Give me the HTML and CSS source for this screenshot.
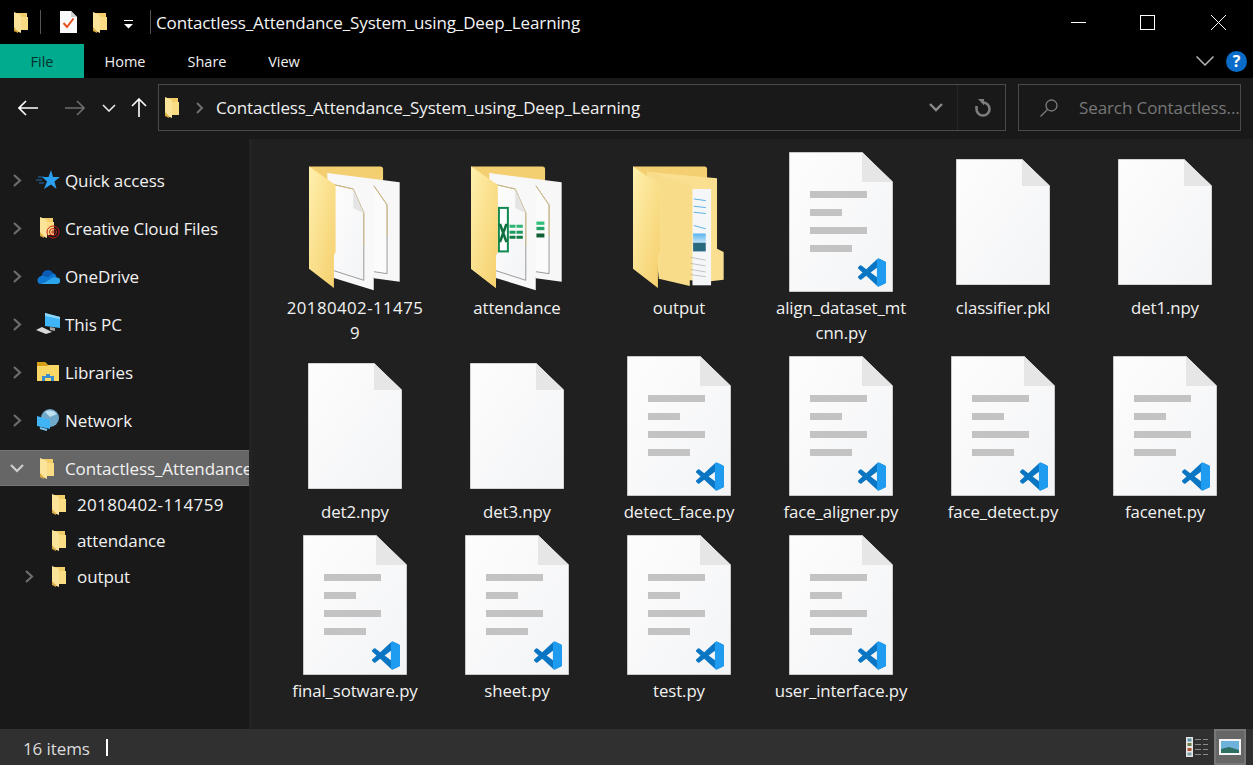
FILE: index.html
```html
<!DOCTYPE html>
<html lang="en">
<head>
<meta charset="utf-8">
<title>Contactless_Attendance_System_using_Deep_Learning</title>
<link rel="stylesheet" href="styles.css">
</head>
<body>
<svg class="defs" aria-hidden="true">
  <defs>
    <linearGradient id="leaf" x1="0" y1="0" x2="1" y2="1"><stop offset="0" stop-color="#fff0ad"/><stop offset="1" stop-color="#f5cf6c"/></linearGradient>
    <linearGradient id="page" x1="0" y1="0" x2="1" y2="1"><stop offset="0" stop-color="#fdfdfd"/><stop offset="1" stop-color="#f3f4f6"/></linearGradient>
    <linearGradient id="sky" x1="0" y1="0" x2="0" y2="1"><stop offset="0" stop-color="#59b4ee"/><stop offset="1" stop-color="#cde8f8"/></linearGradient>
    <clipPath id="vs-right"><rect x="16" y="0" width="8" height="24"/></clipPath>
    <symbol id="chev-r" viewBox="0 0 9 13"><path d="M1 1L7 6.500L1 12" fill="none" stroke="#6d6d6d" stroke-width="2.200"/></symbol>
    <symbol id="mini" viewBox="0 0 14 21">
      <path d="M1 1H13V17H1Z" fill="#f3cd6a"/>
      <path d="M0 0L7 3V21L0 18Z" fill="#fbe49a"/>
      <path d="M7 5H14V18H7Z" fill="#fadc85"/>
      <path d="M0 15L4 19.500L4 21L0 19Z" fill="#d8a93e"/>
    </symbol>
    <symbol id="vs" viewBox="0 0 24 24">
      <path fill="#0a75c2" d="M23.150 2.587L18.210.21a1.494 1.494 0 0 0-1.705.29l-9.460 8.630-4.120-3.128a.999.999 0 0 0-1.276.057L.327 7.261A1 1 0 0 0 .326 8.740L3.899 12 .326 15.260a1 1 0 0 0 .001 1.479L1.650 17.940a.999.999 0 0 0 1.276.057l4.120-3.128 9.460 8.630a1.492 1.492 0 0 0 1.704.290l4.942-2.377A1.500 1.500 0 0 0 24 20.060V3.939a1.500 1.500 0 0 0-.850-1.352zm-5.146 14.861L10.826 12l7.178-5.448v10.896z"/>
      <path fill="#1f9cf0" clip-path="url(#vs-right)" d="M23.150 2.587L18.210.21a1.494 1.494 0 0 0-1.705.29L16 1V23l.5.5a1.492 1.492 0 0 0 1.704.290l4.942-2.377A1.500 1.500 0 0 0 24 20.060V3.939a1.500 1.500 0 0 0-.850-1.352zm-5.146 14.861V6.552v10.896z"/>
    </symbol>
    <symbol id="pyfile" viewBox="0 0 104 140">
      <path d="M.5.500H73L103.500 30V139.500H.5Z" fill="url(#page)" stroke="#c9c9c9"/>
      <path d="M73 0V30H104Z" fill="#e6e6e6"/>
      <rect class="ln" x="21" y="39" width="57" height="7"/>
      <rect class="ln" x="21" y="57" width="32" height="7"/>
      <rect class="ln" x="21" y="75" width="57" height="7"/>
      <rect class="ln" x="21" y="93" width="42" height="7"/>
      <use href="#vs" x="69" y="106" width="28" height="29"/>
    </symbol>
    <symbol id="blank" viewBox="0 0 94 126">
      <path d="M.5.500H66L93.500 27V125.500H.5Z" fill="url(#page)" stroke="#d4d4d4"/>
      <path d="M66 0V27H94Z" fill="#e6e6e6"/>
    </symbol>
    <symbol id="papers" viewBox="85 55 280 385">
      <path d="M85 62H300Q308 62 308 70V112H85Z" fill="#f3cf72"/>
      <path d="M140 82L358 110V409L280 399Z" fill="#f7f7f7"/>
      <path d="M280 120L320 178V385L280 379" fill="#fbfbfb" stroke="#6b6b6b" stroke-width="2"/>
      <path d="M280 120L320 178V270" fill="none" stroke="#e6c46a" stroke-width="2"/>
      <path d="M140 82L280 122V435L150 395Z" fill="#f8f8f8"/>
      <path d="M160 117L218 130L250 202V405L160 376" fill="url(#page)" stroke="#6b6b6b" stroke-width="2"/>
      <path d="M160 117L218 130L250 202V300" fill="none" stroke="#e6c46a" stroke-width="2"/>
      <path d="M218 131V188L250 202Z" fill="#e4e4e4"/>
      <path d="M85 62L165 118V320L160 330V428L85 370Z" fill="url(#leaf)"/>
    </symbol>
    <symbol id="output" viewBox="67 55 280 385">
      <path d="M67 62H282Q290 62 290 70V110H67Z" fill="#f3cf72"/>
      <path d="M108 78L320 98V310L340 320V403L300 408L145 400Z" fill="#fadf90"/>
      <rect x="246" y="130" width="56" height="290" fill="#f5f6f8"/>
      <path d="M250 160L286 165M250 182L286 186M250 200L286 204M250 240L286 250" stroke="#3da2e0" stroke-width="2.500"/>
      <rect x="248" y="264" width="38" height="30" fill="url(#sky)"/>
      <rect x="248" y="292" width="38" height="26" fill="#2a6a7e"/>
      <path d="M240 336L286 344M240 354L286 362M240 372L286 380M240 388L286 394" stroke="#a9a9a9" stroke-width="2"/>
      <path d="M108 78L245 120V300L238 320V422L145 400V330L150 320V115Z" fill="#f9dc89"/>
      <path d="M67 62L148 118V320L142 330V428L67 370Z" fill="url(#leaf)"/>
    </symbol>
  </defs>
</svg>

<div class="window">
  <header class="titlebar">
    <svg class="q-folder"><use href="#mini"/></svg>
    <span class="q-sep first"></span>
    <svg class="q-doc" viewBox="0 0 17 22">
      <path d="M0 0H11L17 6V22H0Z" fill="#fafafa"/>
      <path d="M11 0V6H17Z" fill="#cfcfcf"/>
      <path d="M3.500 12L7 16L13.500 7.500" fill="none" stroke="#e8501e" stroke-width="2"/>
    </svg>
    <svg class="q-folder second"><use href="#mini"/></svg>
    <svg class="q-drop" viewBox="0 0 9 9"><path d="M0 .5H9" stroke="#fff"/><path d="M0 4H9L4.500 8.500Z" fill="#fff"/></svg>
    <span class="q-sep last"></span>
    <span class="title-text">Contactless_Attendance_System_using_Deep_Learning</span>
    <div class="win-controls">
      <svg class="win-btn" viewBox="0 0 15 15"><path d="M0 7.500H15" stroke="#fff"/></svg>
      <svg class="win-btn max" viewBox="0 0 15 15"><rect x=".5" y=".5" width="14" height="14" fill="none" stroke="#fff"/></svg>
      <svg class="win-btn" viewBox="0 0 15 15"><path d="M0 0L15 15M15 0L0 15" stroke="#fff"/></svg>
    </div>
  </header>

  <nav class="tabs">
    <span class="tab file">File</span>
    <span class="tab home">Home</span>
    <span class="tab share">Share</span>
    <span class="tab view">View</span>
    <svg class="ribbon-chev" viewBox="0 0 18 10"><path d="M.5.500L9 9L17.500.500" fill="none" stroke="#b5b5b5" stroke-width="1.500"/></svg>
    <span class="help">?</span>
  </nav>

  <section class="navbar">
    <svg class="nav-ico back" viewBox="0 0 20 16"><path d="M20 8H1M8 1L1 8L8 15" fill="none" stroke="#fff" stroke-width="1.600"/></svg>
    <svg class="nav-ico fwd" viewBox="0 0 20 16"><path d="M0 8H19M12 1L19 8L12 15" fill="none" stroke="#6d6d6d" stroke-width="1.600"/></svg>
    <svg class="nav-down" viewBox="0 0 14 8"><path d="M1 1L7 7L13 1" fill="none" stroke="#e6e6e6" stroke-width="1.600"/></svg>
    <svg class="nav-up" viewBox="0 0 16 19"><path d="M8 19V1M1 8L8 1L15 8" fill="none" stroke="#fff" stroke-width="1.600"/></svg>
    <div class="address">
      <svg class="addr-folder"><use href="#mini"/></svg>
      <svg class="addr-chev" viewBox="0 0 8 12"><path d="M1 1L6 6L1 11" fill="none" stroke="#6f6f6f" stroke-width="2"/></svg>
      <span class="addr-text">Contactless_Attendance_System_using_Deep_Learning</span>
      <svg class="addr-drop" viewBox="0 0 14 9"><path d="M1 1L7 7L13 1" fill="none" stroke="#8c8c8c" stroke-width="2.400"/></svg>
      <span class="addr-refresh">
        <svg class="refresh" viewBox="0 0 18 18"><path d="M10 3.500A6.500 6.500 0 1 1 3.500 10V7" fill="none" stroke="#7d7d7d" stroke-width="2.600"/><path d="M4 0H10V6.500Z" fill="#7d7d7d" transform="translate(1 0)"/></svg>
      </span>
    </div>
    <div class="search">
      <svg class="search-ico" viewBox="0 0 18 18"><circle cx="11.500" cy="6.500" r="5.500" fill="none" stroke="#7c7c7c" stroke-width="1.300"/><path d="M7.500 10.500L.5 17.500" stroke="#7c7c7c" stroke-width="1.300"/></svg>
      <span class="search-text">Search Contactless...</span>
    </div>
  </section>

  <main class="main">
    <aside class="tree">
      <div class="row top">
        <svg class="chev"><use href="#chev-r"/></svg>
        <svg class="tico" viewBox="0 0 24 20"><path d="M15 0L17 7H24L18.500 11.500L20.500 19L15 14.500L8 19L11 11.500L6 7H12.500Z" fill="#2b9ff0"/><path d="M2 7H8M0 10H6M3 13H8" stroke="#1c6fb0"/></svg>
        <span class="tlabel">Quick access</span>
      </div>
      <div class="row top">
        <svg class="chev"><use href="#chev-r"/></svg>
        <svg class="tico" viewBox="0 0 24 22"><g transform="translate(4 0)"><use href="#mini" width="14" height="21"/></g><g fill="none" stroke="#c01c18" stroke-width="1"><circle cx="17" cy="15" r="6"/><circle cx="17" cy="15" r="3.500"/><circle cx="17" cy="15" r="1.200"/></g></svg>
        <span class="tlabel">Creative Cloud Files</span>
      </div>
      <div class="row top">
        <svg class="chev"><use href="#chev-r"/></svg>
        <svg class="tico" viewBox="0 0 24 16"><path d="M6 7A6 6 0 0 1 17 5L12 9L8 7Z" fill="#0a5cb8"/><path d="M4 16A4 4 0 0 1 4 8.500L7 7L12 9L17 5A5 5 0 0 1 20.500 9Z" fill="#0f78d4"/><path d="M4 16H21A3 3 0 0 0 21 9.500L18 9L9 14Z" fill="#2aa5ee"/></svg>
        <span class="tlabel">OneDrive</span>
      </div>
      <div class="row top">
        <svg class="chev"><use href="#chev-r"/></svg>
        <svg class="tico" viewBox="0 0 24 22"><path d="M9 0L24 4V15L9 13Z" fill="#3fb4f6"/><path d="M9 0L24 4V6L9 3Z" fill="#8ed6fb"/><path d="M14 14L19 15V18L14 17Z" fill="#a6a6a6"/><path d="M0 17L6 14L16 19L10 21Z" fill="#d9d9d9"/></svg>
        <span class="tlabel">This PC</span>
      </div>
      <div class="row top">
        <svg class="chev"><use href="#chev-r"/></svg>
        <svg class="tico" viewBox="0 0 24 20"><path d="M1 0H9L12 3H23V19H1Z" fill="#fad764"/><path d="M1 0H9L12 4H1Z" fill="#d99f14"/><path d="M6 19V14H10V12H14V14H18V19H15V16H9V19Z" fill="#3a8ed4"/></svg>
        <span class="tlabel">Libraries</span>
      </div>
      <div class="row top">
        <svg class="chev"><use href="#chev-r"/></svg>
        <svg class="tico" viewBox="0 0 24 22"><circle cx="14" cy="9" r="9" fill="#6fa8c8"/><path d="M9 3A9 9 0 0 1 21 5L14 8Z" fill="#bfe0ee"/><path d="M1 7L14 11V20L1 17Z" fill="#3fb4f6"/><path d="M4 19L11 21" stroke="#7fc7ee" stroke-width="2"/></svg>
        <span class="tlabel">Network</span>
      </div>
      <div class="row top selected">
        <svg class="chev-d" viewBox="0 0 14 9"><path d="M1 1L7 7L13 1" fill="none" stroke="#cfcfcf" stroke-width="2.200"/></svg>
        <svg class="tico small"><use href="#mini"/></svg>
        <span class="tlabel">Contactless_Attendance_System_using_Deep_Learning</span>
      </div>
      <div class="row sub">
        <span class="chev-slot"></span>
        <svg class="sfolder"><use href="#mini"/></svg>
        <span class="tlabel digits">20180402-114759</span>
      </div>
      <div class="row sub">
        <span class="chev-slot"></span>
        <svg class="sfolder"><use href="#mini"/></svg>
        <span class="tlabel">attendance</span>
      </div>
      <div class="row sub">
        <span class="chev-slot"><svg class="chev"><use href="#chev-r"/></svg></span>
        <svg class="sfolder"><use href="#mini"/></svg>
        <span class="tlabel">output</span>
      </div>
    </aside>

    <section class="files">
      <figure class="item"><div class="ibox"><svg class="folder"><use href="#papers"/></svg></div><figcaption class="digits">20180402-11475<br>9</figcaption></figure>
      <figure class="item"><div class="ibox">
        <svg class="folder" viewBox="85 55 280 385"><use href="#papers" x="85" y="55" width="280" height="385"/>
          <rect x="169" y="187" width="27" height="131" fill="#fff" stroke="#10894e" stroke-width="6"/>
          <path d="M172 235L192 290M192 235L172 290" stroke="#10703f" stroke-width="8"/>
          <path d="M201 242H219M222 242H241" stroke="#2fb573" stroke-width="9"/>
          <path d="M201 260H219M222 260H241" stroke="#1f9a5f" stroke-width="9"/>
          <path d="M201 275H219M222 275H241" stroke="#107c41" stroke-width="9"/>
          <path d="M282 233H306" stroke="#34c07b" stroke-width="10"/>
          <path d="M282 249H306" stroke="#21a366" stroke-width="10"/>
          <path d="M282 270H306" stroke="#0f5f35" stroke-width="12"/>
          <path d="M85 62L165 118V320L160 330V428L85 370Z" fill="url(#leaf)"/>
        </svg></div><figcaption>attendance</figcaption></figure>
      <figure class="item"><div class="ibox"><svg class="folder"><use href="#output"/></svg></div><figcaption>output</figcaption></figure>
      <figure class="item"><div class="ibox"><svg class="py"><use href="#pyfile"/></svg></div><figcaption>align_dataset_mt<br>cnn.py</figcaption></figure>
      <figure class="item"><div class="ibox"><svg class="bl"><use href="#blank"/></svg></div><figcaption>classifier.pkl</figcaption></figure>
      <figure class="item"><div class="ibox"><svg class="bl"><use href="#blank"/></svg></div><figcaption>det1.npy</figcaption></figure>
      <figure class="item"><div class="ibox"><svg class="bl"><use href="#blank"/></svg></div><figcaption>det2.npy</figcaption></figure>
      <figure class="item"><div class="ibox"><svg class="bl"><use href="#blank"/></svg></div><figcaption>det3.npy</figcaption></figure>
      <figure class="item"><div class="ibox"><svg class="py"><use href="#pyfile"/></svg></div><figcaption>detect_face.py</figcaption></figure>
      <figure class="item"><div class="ibox"><svg class="py"><use href="#pyfile"/></svg></div><figcaption>face_aligner.py</figcaption></figure>
      <figure class="item"><div class="ibox"><svg class="py"><use href="#pyfile"/></svg></div><figcaption>face_detect.py</figcaption></figure>
      <figure class="item"><div class="ibox"><svg class="py"><use href="#pyfile"/></svg></div><figcaption>facenet.py</figcaption></figure>
      <figure class="item"><div class="ibox"><svg class="py"><use href="#pyfile"/></svg></div><figcaption>final_sotware.py</figcaption></figure>
      <figure class="item"><div class="ibox"><svg class="py"><use href="#pyfile"/></svg></div><figcaption>sheet.py</figcaption></figure>
      <figure class="item"><div class="ibox"><svg class="py"><use href="#pyfile"/></svg></div><figcaption>test.py</figcaption></figure>
      <figure class="item"><div class="ibox"><svg class="py"><use href="#pyfile"/></svg></div><figcaption>user_interface.py</figcaption></figure>
    </section>
  </main>

  <footer class="status">
    <span class="count">16 items</span>
    <span class="caret"></span>
    <svg class="details" viewBox="0 0 22 20">
      <rect width="7" height="20" fill="#e6e6e6"/>
      <rect x="1.500" y="1.500" width="4" height="3" fill="#5b93a8"/><rect x="1.500" y="6" width="4" height="3" fill="#6a7f4a"/><rect x="1.500" y="11" width="4" height="3" fill="#b0552f"/><rect x="1.500" y="15.500" width="4" height="3" fill="#7fa0a8"/>
      <path d="M9 2.500H15M17 2.500H22M9 7.500H15M17 7.500H22M9 12.500H15M17 12.500H22M9 17.500H15M17 17.500H22" stroke="#8a8a8a" stroke-width="1.200"/>
    </svg>
    <span class="thumb-btn">
      <svg class="thumb" viewBox="0 0 22 16"><rect width="22" height="16" fill="#f4f4f4"/><rect x="2" y="2" width="18" height="12" fill="#6eb2dc"/><path d="M2 10L10 8L20 11V14H2Z" fill="#2f6f62"/></svg>
    </span>
  </footer>
</div>
</body>
</html>
```
FILE: styles.css
```css
* { box-sizing: border-box; }
html, body { margin: 0; height: 100%; overflow: hidden; }
body { background: #000; color: #fff; font-family: "Open Sans", "Noto Sans", sans-serif; font-size: 16px; }
.defs { display: block; width: 0; height: 0; }
.window { display: flex; flex-direction: column; height: 765px; width: 1253px; }

/* title bar */
.titlebar { height: 44px; display: flex; align-items: center; background: #000; flex: none; }
.q-folder { width: 14px; height: 21px; margin-left: 14px; flex: none; }
.q-folder.second { margin-left: 16px; }
.q-sep { width: 1px; height: 24px; background: #555; flex: none; }
.q-sep.first { margin-left: 12px; }
.q-sep.last { margin-left: 17px; }
.q-doc { width: 17px; height: 22px; margin-left: 19px; flex: none; }
.q-drop { width: 9px; height: 9px; margin-left: 17px; margin-top: 4px; flex: none; }
.title-text { margin-left: 5px; font-size: 17px; letter-spacing: -.12px; white-space: nowrap; color: #f4f4f4; }
.win-controls { margin-left: auto; margin-right: 27px; display: flex; gap: 55px; }
.win-btn { width: 15px; height: 15px; }
.win-btn.max { position: relative; left: -1px; }

/* tabs */
.tabs { height: 34px; display: flex; align-items: center; background: #000; flex: none; font-size: 14.5px; }
.tab { height: 34px; display: flex; align-items: center; justify-content: center; color: #f0f0f0; }
.tab.file { width: 84px; background: #00ab8e; color: #04302a; }
.tab.home { width: 82px; }
.tab.share { width: 82px; }
.tab.view { width: 74px; margin-right: auto; margin-left: -1px; }
.ribbon-chev { width: 18px; height: 10px; margin-right: 12px; }
.help { width: 21px; height: 21px; margin-right: 6px; border-radius: 50%; background: #0a6cc8; color: #fff; font-size: 16px; font-weight: 700; display: flex; align-items: center; justify-content: center; }

/* nav bar */
.navbar { height: 61px; background: #191919; display: flex; align-items: center; flex: none; padding-bottom: 2px; }
.nav-ico { width: 20px; height: 16px; flex: none; }
.back { margin-left: 18px; }
.fwd { margin-left: 27px; }
.nav-down { width: 14px; height: 8px; margin-left: 17px; flex: none; }
.nav-up { width: 16px; height: 19px; margin-left: 15px; flex: none; }
.address { width: 848px; height: 47px; margin-left: 11px; border: 1px solid #4a4a4a; display: flex; align-items: center; flex: none; padding-left: 6px; }
.addr-folder { width: 14px; height: 21px; flex: none; }
.addr-chev { width: 8px; height: 12px; margin-left: 17px; flex: none; }
.addr-text { margin-left: 12px; font-size: 17px; letter-spacing: -.12px; white-space: nowrap; color: #f0f0f0; }
.addr-drop { width: 14px; height: 9px; margin-left: auto; flex: none; }
.addr-refresh { width: 48px; height: 45px; margin-left: 14px; border-left: 1px solid #262626; display: flex; align-items: center; justify-content: center; flex: none; }
.refresh { width: 18px; height: 18px; }
.search { width: 223px; height: 47px; margin-left: 12px; border: 1px solid #4a4a4a; display: flex; align-items: center; flex: none; padding-left: 21px; }
.search-ico { width: 18px; height: 18px; flex: none; }
.search-text { margin-left: 21px; color: #777; font-size: 17px; letter-spacing: -.1px; white-space: nowrap; overflow: hidden; }

/* main */
.main { flex: 1; min-height: 0; display: flex; background: #202020; }
.tree { width: 249px; flex: none; background: #191919; padding-top: 23px; overflow: hidden; }
.row { display: flex; align-items: center; height: 36px; white-space: nowrap; }
.row.top { margin-bottom: 12px; padding-left: 13px; }
.row.selected { margin-bottom: 0; background: #666; border-top: 1px solid #757575; border-bottom: 1px solid #757575; padding-left: 10px; }
.chev { width: 9px; height: 13px; flex: none; display: block; }
.chev-d { width: 14px; height: 9px; flex: none; }
.tico { width: 24px; height: 22px; margin-left: 14px; margin-right: 5px; flex: none; }
.tico.small { width: 14px; height: 21px; margin-left: 16px; margin-right: 11px; }
.tlabel { font-size: 17px; letter-spacing: -.1px; color: #f2f2f2; }
.tlabel.digits { letter-spacing: .35px; }
.row.sub { padding-left: 25px; }
.chev-slot { width: 9px; flex: none; }
.sfolder { width: 14px; height: 21px; margin-left: 18px; margin-right: 11px; flex: none; }

.files { flex: 1; padding: 13px 0 0 22px; display: grid; grid-template-columns: repeat(6, 162px); grid-auto-rows: min-content; border-left: 3px solid #232323; }
.item { margin: 0 0 11px; text-align: center; }
.ibox { height: 140px; display: flex; align-items: center; justify-content: center; }
.py { width: 104px; height: 140px; }
.bl { width: 94px; height: 126px; }
.folder { width: 93px; height: 128px; margin-top: 11px; }
figcaption { margin-top: 3px; font-size: 16.8px; line-height: 25px; color: #f2f2f2; white-space: nowrap; letter-spacing: -.1px; }
figcaption.digits { letter-spacing: .45px; }
.ln { fill: #c3c3c3; }

/* status */
.status { height: 36px; flex: none; background: #303030; display: flex; align-items: center; padding-left: 23px; }
.count { font-size: 17px; color: #dcdcdc; letter-spacing: -.1px; padding-top: 2px; }
.caret { width: 2px; height: 17px; background: #fff; margin-left: 16px; }
.details { width: 22px; height: 20px; margin-left: auto; }
.thumb-btn { width: 32px; height: 36px; margin-left: 6px; margin-right: 7px; background: #666; border: 2px solid #777; display: flex; align-items: center; justify-content: center; }
.thumb { width: 22px; height: 16px; }
```
